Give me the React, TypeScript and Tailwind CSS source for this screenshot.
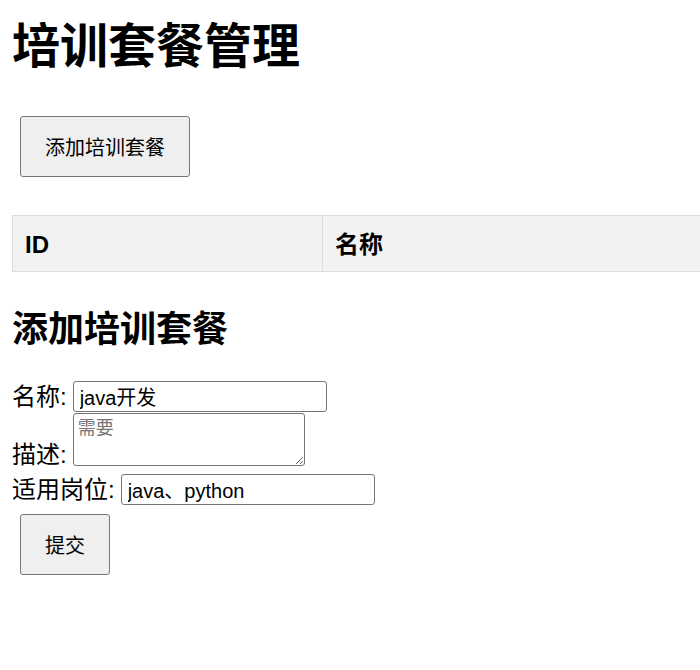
import React from "react";

const FONT = "font-['Liberation_Sans','Noto_Sans_CJK_SC',sans-serif]";

export default function App() {
  return (
    <div className={`w-[700px] h-[670px] overflow-hidden bg-white text-black ${FONT}`}>
      <div className="px-[12px]">
        <h1 className="mt-[19px] text-[48px] leading-[56px] font-bold">培训套餐管理</h1>

        <button className="mt-[41px] ml-[8px] flex h-[61px] w-[170px] items-center justify-center rounded-[3px] border border-[#767676] bg-[#efefef] pt-[2px] text-[20px] leading-[24px] text-black">
          添加培训套餐
        </button>

        <div className="mt-[38px] w-[1000px]">
          <table className="w-[1000px] border-collapse">
            <thead>
              <tr>
                <th className="h-[56px] w-[310px] border border-[#dddddd] bg-[#f2f2f2] px-[12px] pt-[2px] text-left text-[24px] font-bold leading-[28px]">
                  ID
                </th>
                <th className="h-[56px] border border-[#dddddd] bg-[#f2f2f2] px-[12px] pt-[2px] text-left text-[24px] font-bold leading-[28px]">
                  名称
                </th>
              </tr>
            </thead>
          </table>
        </div>

        <h2 className="mt-[37px] text-[36px] leading-[42px] font-bold">添加培训套餐</h2>

        <div className="mt-[30px] flex items-center gap-[6px]">
          <span className="text-[24px] leading-[28px]">名称:</span>
          <input
            className="h-[31px] w-[254px] rounded-[3px] border border-[#767676] bg-white pl-[6px] text-[20px] leading-[24px] text-black outline-none"
            defaultValue="java开发"
          />
        </div>

        <div className="mt-[1px] flex items-end gap-[6px]">
          <span className="text-[24px] leading-[22px]">描述:</span>
          <textarea
            className="block h-[53px] w-[232px] rounded-[3px] border border-[#767676] bg-white px-[4px] py-[2px] text-[18px] leading-[24px] text-black outline-none placeholder:text-[#757575]"
            placeholder="需要"
          />
        </div>

        <div className="mt-[8px] flex items-center gap-[6px]">
          <span className="text-[24px] leading-[28px]">适用岗位:</span>
          <input
            className="h-[31px] w-[254px] rounded-[3px] border border-[#767676] bg-white pl-[6px] text-[20px] leading-[24px] text-black outline-none"
            defaultValue="java、python"
          />
        </div>

        <button className="mt-[9px] ml-[8px] flex h-[61px] w-[90px] items-center justify-center rounded-[3px] border border-[#767676] bg-[#efefef] pt-[2px] text-[20px] leading-[24px] text-black">
          提交
        </button>
      </div>
    </div>
  );
}
